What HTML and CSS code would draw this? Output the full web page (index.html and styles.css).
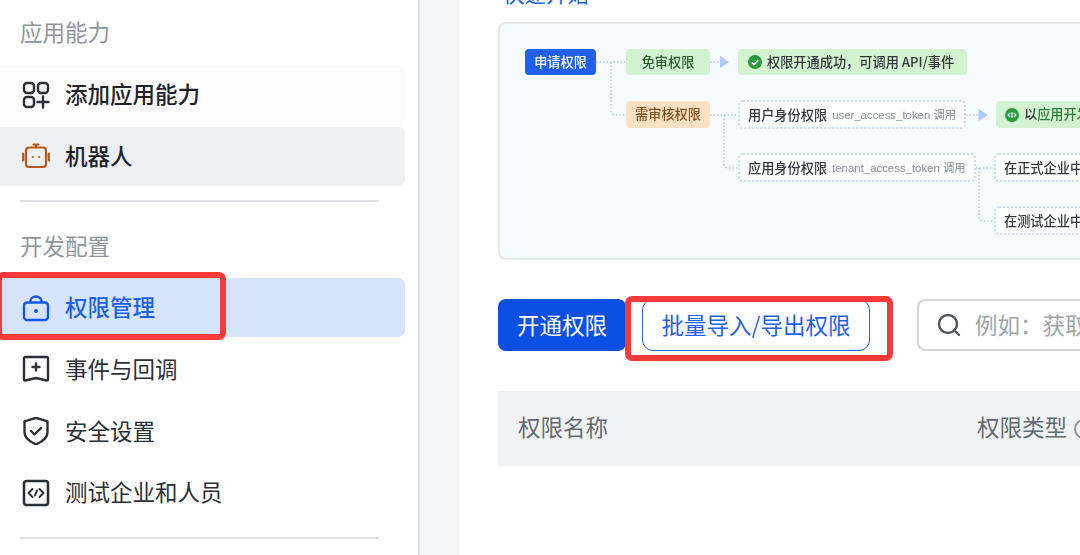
FILE: index.html
```html
<!DOCTYPE html>
<html lang="zh-CN">
<head>
<meta charset="utf-8">
<title>权限管理</title>
<link rel="stylesheet" href="styles.css">
</head>
<body>
<div class="page">
  <aside class="sidebar">
    <div class="group-title first">应用能力</div>
    <nav class="menu">
      <div class="item faint">
        <svg class="icon" viewBox="0 0 28 28" fill="none" stroke="#2b2f36" stroke-width="2.4"><rect x="2" y="2" width="10" height="10" rx="3"/><rect x="16" y="2" width="10" height="10" rx="3"/><rect x="2" y="16" width="10" height="10" rx="3"/><path d="M21 15.500v11M15.500 21h11" stroke-linecap="round"/></svg>
        <span>添加应用能力</span>
      </div>
      <div class="item hover">
        <svg class="icon" viewBox="0 0 28 28" fill="none" stroke="#b4591c" stroke-width="2.200"><rect x="4" y="5.500" width="20" height="19.500" rx="3"/><path d="M11.500 2.500h5M14 2.500v3" stroke-linecap="round"/><path d="M1 12v6M27 12v6" stroke-width="2.800" stroke-linecap="round"/><circle cx="10.800" cy="15" r="1.100" fill="#b4591c" stroke="none"/><circle cx="17.200" cy="15" r="1.100" fill="#b4591c" stroke="none"/></svg>
        <span>机器人</span>
      </div>
    </nav>
    <div class="rule first-rule"></div>
    <div class="group-title second">开发配置</div>
    <nav class="menu">
      <div class="item selected">
        <svg class="icon" viewBox="0 0 28 28" fill="none" stroke="#1456f0" stroke-width="2.400"><rect x="2" y="8.500" width="24" height="17.500" rx="3"/><path d="M8.500 8.500V7a5.500 4.500 0 0 1 11 0v1.500"/><circle cx="14" cy="17" r="2" fill="#1456f0" stroke="none"/></svg>
        <span>权限管理</span>
      </div>
      <div class="item">
        <svg class="icon" viewBox="0 0 28 28" fill="none" stroke="#2b2f36" stroke-width="2.400"><path d="M3.500 2h21a1.500 1.500 0 0 1 1.500 1.500v21a1 1 0 0 1-1.300 1L14 23l-10.700 2.500a1 1 0 0 1-1.300-1v-21A1.500 1.500 0 0 1 3.500 2z" stroke-linejoin="round"/><path d="M14 8.500v7M10.500 12h7" stroke-linecap="round"/></svg>
        <span>事件与回调</span>
      </div>
      <div class="item">
        <svg class="icon" viewBox="0 0 28 28" fill="none" stroke="#2b2f36" stroke-width="2.400"><path d="M14 .8l11.500 3.500v11c0 5-5 9.500-11.500 12C7.500 24.800 2.500 20.300 2.500 15.300v-11z" stroke-linejoin="round"/><path d="M9 14l3.500 3.500L19 11" stroke-linecap="round" stroke-linejoin="round"/></svg>
        <span>安全设置</span>
      </div>
      <div class="item">
        <svg class="icon" viewBox="0 0 28 28" fill="none" stroke="#2b2f36" stroke-width="2.600"><rect x="2" y="2" width="24" height="24" rx="2.500"/><path d="M10.500 10l-4 4 4 4M17.500 10l4 4-4 4M15 11.500l-2 5" stroke-width="2" stroke-linecap="round" stroke-linejoin="round"/></svg>
        <span>测试企业和人员</span>
      </div>
    </nav>
    <div class="rule last-rule"></div>
    <div class="mark mark-side"></div>
  </aside>

  <main class="main">
    <a class="quick-link">快速开始</a>

    <section class="diagram">
      <svg class="wires" viewBox="0 0 700 236" fill="none" stroke="#b3caf9" stroke-width="1.600" stroke-dasharray="1.500 2">
        <path d="M96 38h30M111 38v49a4 4 0 0 0 4 4h11M210 38h10"/>
        <path d="M210 91h28M224 91v49a4 4 0 0 0 4 4h10M466 91h12"/>
        <path d="M476 144h18M479 144v49a4 4 0 0 0 4 4h11"/>
        <path d="M220 32l9 6-9 6zM478.500 85l9.500 6-9.500 6z" fill="#b0c8fa" stroke="none"/>
      </svg>
      <div class="node n-apply">申请权限</div>
      <div class="node n-free">免审权限</div>
      <div class="node n-success">
        <svg class="badge" viewBox="0 0 14 14"><circle cx="7" cy="7" r="7" fill="#2a9a3f"/><path d="M3.800 7.200l2.300 2.300 4.200-4.500" fill="none" stroke="#fff" stroke-width="1.600"/></svg>
        <span>权限开通成功，可调用 API/事件</span>
      </div>
      <div class="node n-review">需审核权限</div>
      <div class="node dashed n-user">用户身份权限<small>user_access_token 调用</small></div>
      <div class="node n-dev">
        <svg class="badge" viewBox="0 0 14 14"><circle cx="7" cy="7" r="7" fill="#2a9a3f"/><path d="M5.200 4.800L3 7l2.200 2.200M8.800 4.800L11 7 8.800 9.200M7 4v6" fill="none" stroke="#fff" stroke-width="1.100"/></svg>
        <span>以<b>应用开发者后台配置</b></span>
      </div>
      <div class="node dashed n-tenant">应用身份权限<small>tenant_access_token 调用</small></div>
      <div class="node dashed n-prod">在正式企业中发布应用</div>
      <div class="node dashed n-test">在测试企业中安装应用</div>
    </section>

    <div class="toolbar">
      <button class="btn primary">开通权限</button>
      <button class="btn outline">批量导入/导出权限</button>
      <div class="search">
        <svg class="search-icon" viewBox="0 0 24 24" fill="none" stroke="#51565d" stroke-width="2.400"><circle cx="11" cy="11" r="9"/><path d="M17.500 17.500l4.500 4.500" stroke-linecap="round"/></svg>
        <span>例如：获取用户信息</span>
      </div>
      <div class="mark mark-btn"></div>
    </div>

    <div class="table-head">
      <span>权限名称</span>
      <span class="type">权限类型 <i class="info"></i></span>
    </div>
  </main>
</div>
</body>
</html>
```
FILE: styles.css
```css
* { box-sizing: border-box; }
html, body { margin: 0; height: 100%; }
body {
  width: 1080px;
  height: 555px;
  overflow: hidden;
  background: #fff;
  font-family: "Noto Sans CJK SC", "Liberation Sans", sans-serif;
  color: #2b2f36;
}
.page { display: flex; height: 555px; background: #f5f6f7; }

.sidebar {
  position: relative;
  flex: 0 0 420px;
  padding-right: 13px;
  background: #fff;
  border-right: 2px solid #dfe1e4;
}
.group-title {
  display: flex;
  align-items: center;
  padding-left: 20px;
  font-size: 22.500px;
  color: #8f959e;
}
.group-title.first { height: 65.300px; padding-bottom: 3px; }
.group-title.second { height: 76px; padding-top: 9px; }
.menu { display: flex; flex-direction: column; gap: 3px; }
.item {
  height: 58.700px;
  padding-left: 22px;
  display: flex;
  align-items: center;
  gap: 15px;
  font-size: 22.500px;
  border-radius: 0 7px 7px 0;
}
.item span { margin-bottom: 3px; }
.item.faint { background: #fbfcfb; font-weight: 500; color: #1f2329; }
.item.hover { background: #eff0f1; font-weight: 500; color: #1f2329; }
.item.selected { background: #d6e4fd; color: #1f60ee; font-weight: 500; }
.icon { width: 28px; height: 28px; flex: none; }
.rule { height: 2px; margin-left: 20px; width: 359px; background: #dfe1e4; }
.first-rule { margin-top: 14.700px; }
.last-rule { margin-top: 15px; }

.mark {
  position: absolute;
  border: 6px solid #fb3a3c;
  border-radius: 7px;
  pointer-events: none;
}
.mark-side { left: -4px; top: 272px; width: 230px; height: 68px; }
.mark-btn { left: 127px; top: -3px; width: 268px; height: 65px; }

.main {
  flex: 1;
  min-width: 0;
  margin-left: 39px;
  padding-left: 39px;
  background: #fff;
  overflow: hidden;
}
.quick-link {
  display: block;
  height: 22px;
  margin: -18px 0 18px;
  padding-left: 5px;
  font-size: 21.500px;
  line-height: 22px;
  color: #1f60ee;
}
.diagram {
  position: relative;
  width: 720px;
  height: 238px;
  background: #f6fbff;
  border: 2px solid #e6e8ea;
  border-radius: 8px;
  filter: blur(.5px);
}
.wires { position: absolute; left: 0; top: 0; width: 700px; height: 236px; }
.node {
  position: absolute;
  display: flex;
  align-items: center;
  justify-content: center;
  padding-bottom: 2px;
  font-size: 13.200px;
  font-weight: 500;
  white-space: nowrap;
  border-radius: 4px;
  color: #33373d;
}
.dashed {
  background: #fff;
  border: 2px dotted #c6d7fb;
  border-radius: 5px;
  justify-content: flex-start;
  padding-left: 8px;
  padding-bottom: 1px;
  height: 29px;
}
.node small { margin-left: 5px; font-size: 11.400px; font-weight: 400; color: #868c95; font-family: "Liberation Sans", "Noto Sans CJK SC", sans-serif; }
.badge { width: 14px; height: 14px; flex: none; margin-top: 2px; }
.n-apply { left: 25px; top: 25px; width: 71px; height: 26px; background: #1f60ee; color: #fff; }
.n-free { left: 126px; top: 25px; width: 84px; height: 26px; background: #d3f2d0; color: #2c5f2f; }
.n-success { left: 238px; top: 25px; width: 229px; height: 26px; background: #d3f2d0; justify-content: flex-start; padding-left: 10px; gap: 5px; }
.n-review { left: 126px; top: 77px; width: 84px; height: 27px; background: #fee0c2; color: #81501f; }
.n-user { left: 238px; top: 76px; width: 228px; }
.n-dev { left: 496px; top: 77px; width: 200px; height: 27px; background: #d3f2d0; justify-content: flex-start; padding-left: 9px; gap: 5px; }
.n-dev b { font-weight: 500; color: #2f7d3a; }
.n-tenant { left: 238px; top: 129px; width: 238px; }
.n-prod { left: 494px; top: 129px; width: 200px; }
.n-test { left: 494px; top: 182px; width: 200px; }

.toolbar {
  position: relative;
  display: flex;
  align-items: stretch;
  height: 52px;
  margin-top: 39px;
  width: 720px;
}
.btn {
  font: inherit;
  font-size: 22.500px;
  line-height: 44px;
  height: 52px;
  padding: 0 0 2px;
  border-radius: 8px;
}
.primary { width: 128px; background: #0b50e5; color: #fff; border: 0; }
.outline { width: 228px; margin-left: 16px; background: #fff; color: #1f60ee; border: 1.500px solid #1f60ee; border-radius: 11px; }
.search {
  width: 300px;
  margin-left: 47px;
  display: flex;
  align-items: center;
  gap: 14px;
  padding-left: 18px;
  border: 2px solid #d3d5d8;
  border-radius: 8px;
  font-size: 22.500px;
  color: #a0a4aa;
  white-space: nowrap;
}
.search span { margin-bottom: 3px; }
.search-icon { width: 24px; height: 24px; flex: none; }

.table-head {
  position: relative;
  width: 720px;
  height: 75px;
  margin-top: 40px;
  display: grid;
  grid-template-columns: 459px 1fr;
  align-items: center;
  padding: 0 20px 5px;
  background: #f0f2f4;
  font-size: 22.500px;
  color: #646a73;
}
.type { white-space: nowrap; }
.info {
  display: inline-block;
  width: 20px;
  height: 20px;
  margin-left: 2px;
  vertical-align: -3px;
  border: 2px solid #8f959e;
  border-radius: 50%;
}
```
